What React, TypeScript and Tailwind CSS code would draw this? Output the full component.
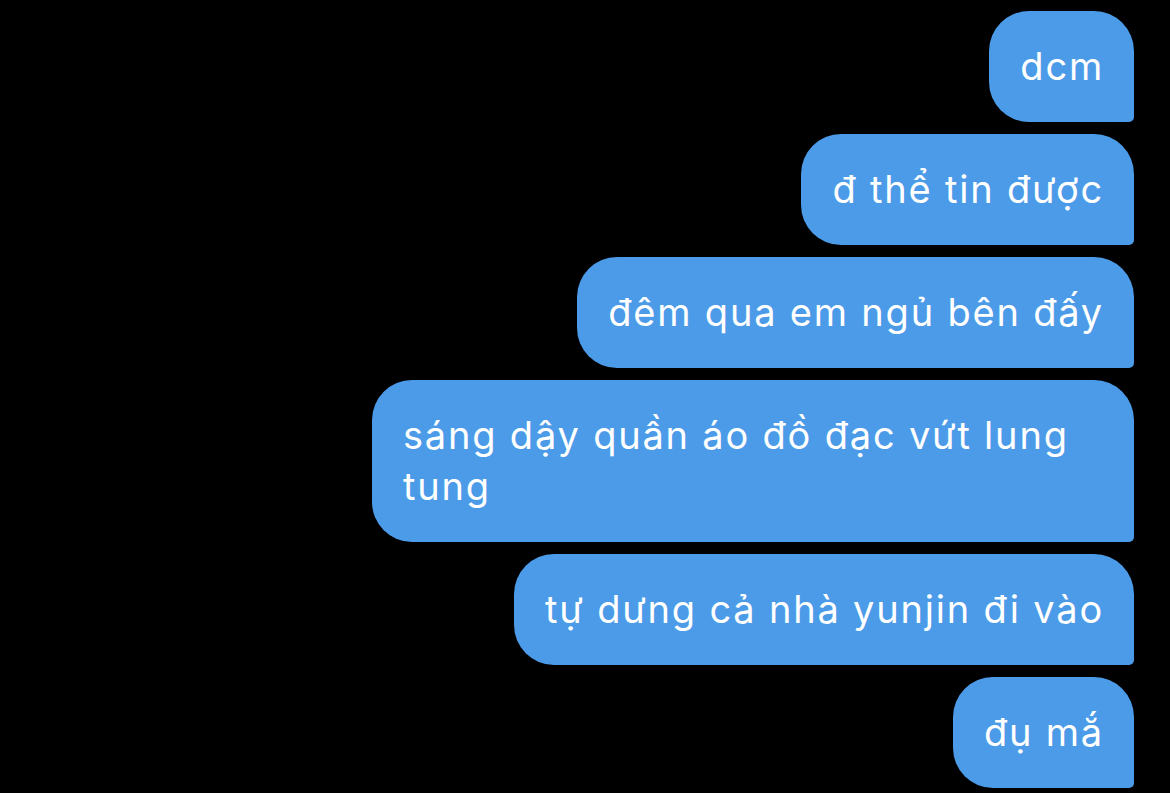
import React from 'react';

const messages = [
  'dcm',
  'đ thể tin được',
  'đêm qua em ngủ bên đấy',
  'sáng dậy quần áo đồ đạc vứt lung tung',
  'tự dưng cả nhà yunjin đi vào',
  'đụ mắ',
];

const Bubble = ({ text }: { text: string }) => (
  <div className="max-w-[762px] rounded-[40px] rounded-br-[5px] bg-[#4b9be8] py-[30px] pl-[31px] pr-[30px] text-[38px] leading-[51px] tracking-[1.8px] text-white">
    {text}
  </div>
);

export default function App() {
  return (
    <div
      className="min-h-[793px] w-full bg-black pt-[11px] pr-[36px]"
      style={{ fontFamily: 'Inter, "Noto Sans", sans-serif' }}
    >
      <div className="flex flex-col items-end gap-[12px]">
        {messages.map((m, i) => (
          <Bubble key={i} text={m} />
        ))}
      </div>
    </div>
  );
}
